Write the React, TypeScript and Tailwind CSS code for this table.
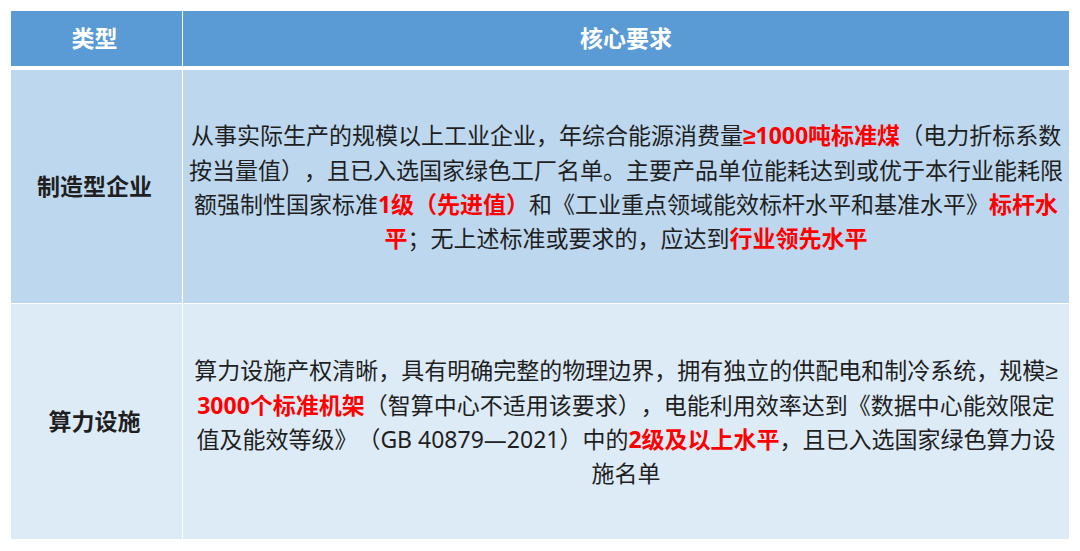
const font = { fontFamily: '"Noto Sans", "Noto Sans CJK SC", sans-serif' }

function Red({ children }: { children: React.ReactNode }) {
  return <span className="font-bold text-[#ff0000]">{children}</span>
}

// ≥ from a Latin font, the CJK one draws a slanted glyph
function Ge() {
  return <span className="font-['Liberation_Sans']">≥</span>
}

const rows = [
  {
    type: '制造型企业',
    bg: 'bg-[#bdd7ee]',
    h: 'h-[233px]',
    lines: [
      <>从事实际生产的规模以上工业企业，年综合能源消费量<Red><Ge />1000吨标准煤</Red>（电力折标系数</>,
      <>按当量值），且已入选国家绿色工厂名单。主要产品单位能耗达到或优于本行业能耗限</>,
      <>额强制性国家标准<Red>1级（先进值）</Red>和《工业重点领域能效标杆水平和基准水平》<Red>标杆水</Red></>,
      <><Red>平</Red>；无上述标准或要求的，应达到<Red>行业领先水平</Red></>,
    ],
  },
  {
    type: '算力设施',
    bg: 'bg-[#ddebf7]',
    h: 'h-[235px]',
    lines: [
      <>算力设施产权清晰，具有明确完整的物理边界，拥有独立的供配电和制冷系统，规模<Ge /></>,
      <><Red>3000个标准机架</Red>（智算中心不适用该要求），电能利用效率达到《数据中心能效限定</>,
      <>值及能效等级》（GB 40879—2021）中的<Red>2级及以上水平</Red>，且已入选国家绿色算力设</>,
      <>施名单</>,
    ],
  },
]

export default function App() {
  return (
    <div
      className="w-[1080px] h-[551px] bg-white pt-[11px] pl-[11px] [text-spacing-trim:space-all]"
      style={font}
    >
      <div className="w-[1058px] flex flex-col">
        <div className="grid grid-cols-[171px_1fr] gap-x-px h-[55px] text-white font-bold text-[23px]">
          <div className="bg-[#5b9bd5] flex items-center justify-center pr-1">类型</div>
          <div className="bg-[#5b9bd5] flex items-center justify-center">核心要求</div>
        </div>
        {rows.map((r, i) => (
          <div
            key={r.type}
            className={`grid grid-cols-[171px_1fr] gap-x-px ${r.h} ${i === 0 ? 'mt-[4px]' : 'mt-px'} text-[#1f1f1f]`}
          >
            <div className={`${r.bg} flex items-center justify-center pr-1 font-bold text-[23px]`}>
              {r.type}
            </div>
            <div className={`${r.bg} flex flex-col items-center justify-center text-[23px] leading-[34px]`}>
              {r.lines.map((l, j) => (
                <div key={j} className="whitespace-nowrap text-center">
                  {l}
                </div>
              ))}
            </div>
          </div>
        ))}
      </div>
    </div>
  )
}
